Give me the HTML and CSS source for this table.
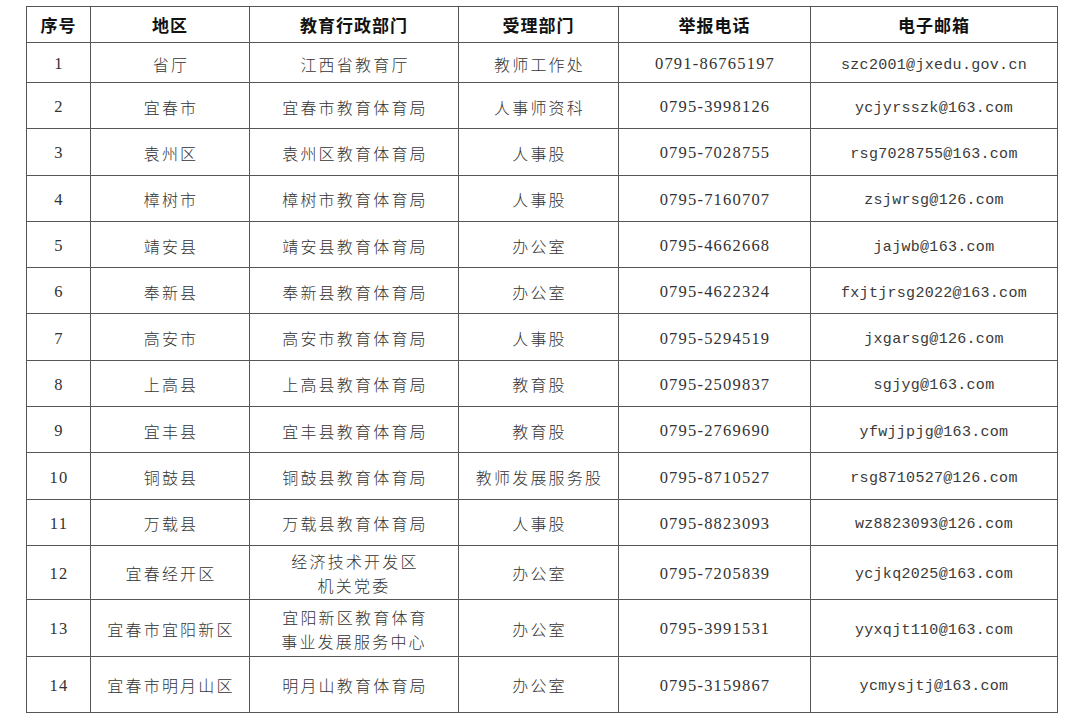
FILE: index.html
```html
<!DOCTYPE html>
<html lang="zh-CN">
<head>
<meta charset="utf-8">
<link rel="stylesheet" href="styles.css">
</head>
<body>
<table class="tbl">
  <colgroup>
    <col class="c1"><col class="c2"><col class="c3"><col class="c4"><col class="c5"><col class="c6">
  </colgroup>
  <thead>
    <tr class="hd"><th>序号</th><th>地区</th><th>教育行政部门</th><th>受理部门</th><th>举报电话</th><th>电子邮箱</th></tr>
  </thead>
  <tbody>
    <tr class="r1"><td class="num">1</td><td class="cn">省厅</td><td class="cn">江西省教育厅</td><td class="cn">教师工作处</td><td class="num">0791-86765197</td><td class="mail">szc2001@jxedu.gov.cn</td></tr>
    <tr class="r"><td class="num">2</td><td class="cn">宜春市</td><td class="cn">宜春市教育体育局</td><td class="cn">人事师资科</td><td class="num">0795-3998126</td><td class="mail">ycjyrsszk@163.com</td></tr>
    <tr class="r"><td class="num">3</td><td class="cn">袁州区</td><td class="cn">袁州区教育体育局</td><td class="cn">人事股</td><td class="num">0795-7028755</td><td class="mail">rsg7028755@163.com</td></tr>
    <tr class="r"><td class="num">4</td><td class="cn">樟树市</td><td class="cn">樟树市教育体育局</td><td class="cn">人事股</td><td class="num">0795-7160707</td><td class="mail">zsjwrsg@126.com</td></tr>
    <tr class="r"><td class="num">5</td><td class="cn">靖安县</td><td class="cn">靖安县教育体育局</td><td class="cn">办公室</td><td class="num">0795-4662668</td><td class="mail">jajwb@163.com</td></tr>
    <tr class="r"><td class="num">6</td><td class="cn">奉新县</td><td class="cn">奉新县教育体育局</td><td class="cn">办公室</td><td class="num">0795-4622324</td><td class="mail">fxjtjrsg2022@163.com</td></tr>
    <tr class="r"><td class="num">7</td><td class="cn">高安市</td><td class="cn">高安市教育体育局</td><td class="cn">人事股</td><td class="num">0795-5294519</td><td class="mail">jxgarsg@126.com</td></tr>
    <tr class="r"><td class="num">8</td><td class="cn">上高县</td><td class="cn">上高县教育体育局</td><td class="cn">教育股</td><td class="num">0795-2509837</td><td class="mail">sgjyg@163.com</td></tr>
    <tr class="r"><td class="num">9</td><td class="cn">宜丰县</td><td class="cn">宜丰县教育体育局</td><td class="cn">教育股</td><td class="num">0795-2769690</td><td class="mail">yfwjjpjg@163.com</td></tr>
    <tr class="r"><td class="num">10</td><td class="cn">铜鼓县</td><td class="cn">铜鼓县教育体育局</td><td class="cn">教师发展服务股</td><td class="num">0795-8710527</td><td class="mail">rsg8710527@126.com</td></tr>
    <tr class="r"><td class="num">11</td><td class="cn">万载县</td><td class="cn">万载县教育体育局</td><td class="cn">人事股</td><td class="num">0795-8823093</td><td class="mail">wz8823093@126.com</td></tr>
    <tr class="r12"><td class="num">12</td><td class="cn">宜春经开区</td><td class="cn">经济技术开发区<br>机关党委</td><td class="cn">办公室</td><td class="num">0795-7205839</td><td class="mail">ycjkq2025@163.com</td></tr>
    <tr class="r13"><td class="num">13</td><td class="cn">宜春市宜阳新区</td><td class="cn">宜阳新区教育体育<br>事业发展服务中心</td><td class="cn">办公室</td><td class="num">0795-3991531</td><td class="mail">yyxqjt110@163.com</td></tr>
    <tr class="r14"><td class="num">14</td><td class="cn">宜春市明月山区</td><td class="cn">明月山教育体育局</td><td class="cn">办公室</td><td class="num">0795-3159867</td><td class="mail">ycmysjtj@163.com</td></tr>
  </tbody>
</table>
</body>
</html>
```

FILE: styles.css
```css
html, body {
  margin: 0;
  padding: 0;
  background: #ffffff;
}
body {
  padding: 6px 0 0 26px;
}
.tbl {
  border-collapse: collapse;
  table-layout: fixed;
  width: 1031px;
  color: #333333;
}
.c1 { width: 64px; }
.c2 { width: 159px; }
.c3 { width: 209px; }
.c4 { width: 160px; }
.c5 { width: 192px; }
.c6 { width: 247px; }
.tbl th, .tbl td {
  border: 1px solid #555555;
  text-align: center;
  vertical-align: middle;
  padding: 3px 0 0 0;
  white-space: nowrap;
}
.tbl th {
  font-family: "Noto Sans CJK SC", "Noto Sans", sans-serif;
  font-weight: 700;
  font-size: 17px;
  letter-spacing: 1px;
  color: #111111;
  line-height: 20px;
  padding-top: 0;
}
.hd { height: 36px; }
.r1 { height: 40px; }
.r { height: 46.3px; }
.r12 { height: 54px; }
.r13 { height: 57px; }
.r14 { height: 56px; }
.tbl .cn {
  font-family: "Noto Sans CJK SC", sans-serif;
  font-weight: 300;
  font-size: 16px;
  letter-spacing: 2.2px;
  line-height: 24px;
  text-indent: 2px;
  padding-top: 2px;
}
.tbl .num {
  font-family: "Liberation Serif", serif;
  font-size: 16.5px;
  letter-spacing: 1.2px;
  text-indent: 1px;
}
.tbl .mail {
  font-family: "Liberation Mono", monospace;
  font-size: 15px;
  letter-spacing: 0.3px;
  color: #3a3a3a;
  padding-top: 5px;
}
```
